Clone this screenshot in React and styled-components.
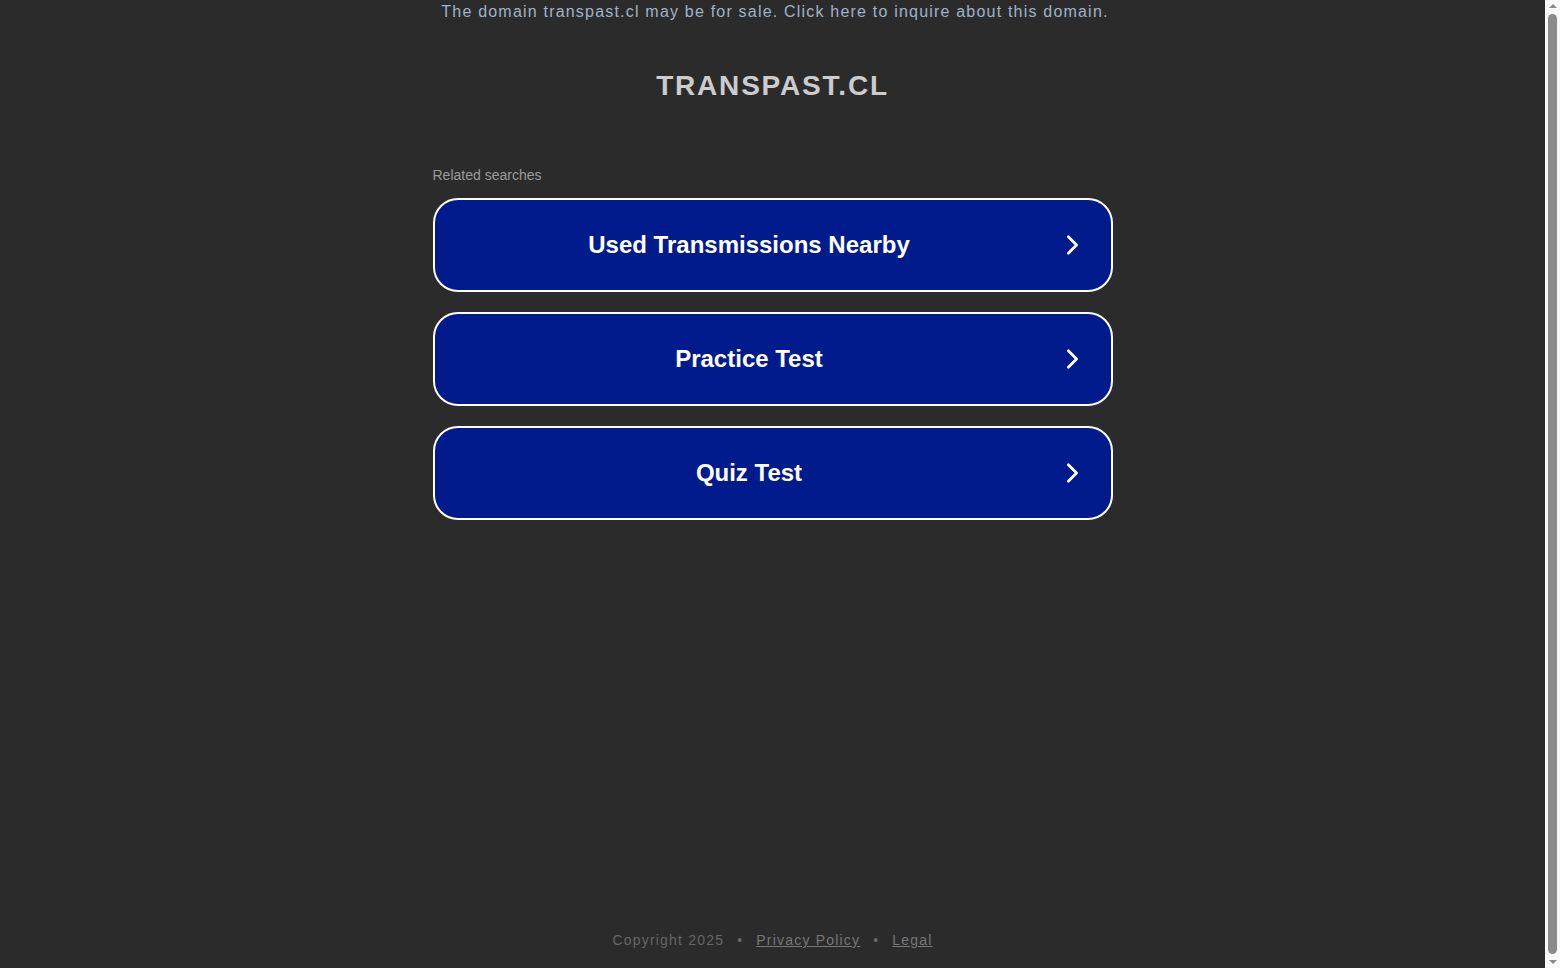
import styled, { createGlobalStyle } from "styled-components";

const GlobalStyle = createGlobalStyle`
  html, body {
    margin: 0;
    padding: 0;
    background: #2b2b2b;
    font-family: "Liberation Sans", Arial, sans-serif;
  }
`;

const Page = styled.div`
  width: calc(100% - 15px);
  min-height: calc(100vh + 32px);
  display: flex;
  flex-direction: column;
  align-items: center;
`;

/* the browser's classic scrollbar, as seen in the screenshot */
const ScrollTrack = styled.div`
  position: fixed;
  top: 0;
  right: 0;
  width: 15px;
  height: 100vh;
  background: #f8f8f8;
  display: flex;
  flex-direction: column;
  align-items: center;
  justify-content: space-between;
  padding: 4px 0;
  box-sizing: border-box;
`;

const ScrollThumb = styled.div`
  flex: 1;
  width: 9px;
  margin: 6px 0;
  border-radius: 5px;
  background: #8a8a8a;
`;

const Arrow = styled.div`
  width: 0;
  height: 0;
  border-left: 4px solid transparent;
  border-right: 4px solid transparent;
  ${(p) =>
    p.$down
      ? "border-top: 4px solid #8a8a8a;"
      : "border-bottom: 4px solid #8a8a8a;"}
`;

const SaleNotice = styled.a`
  display: block;
  margin: 1px 0 0 5px;
  font-size: 16px;
  line-height: 22px;
  letter-spacing: 1.2px;
  color: #9fb3c8;
  text-decoration: none;
  text-align: center;
`;

const Title = styled.h1`
  margin: 47px 0 0 0;
  font-size: 28px;
  line-height: 32px;
  font-weight: bold;
  letter-spacing: 1.8px;
  color: #cccccc;
  text-align: center;
`;

const Container = styled.div`
  width: 680px;
  margin-top: 65px;
`;

const Label = styled.div`
  font-size: 14px;
  line-height: 16px;
  color: #9a9a9a;
  margin-bottom: 15px;
`;

const List = styled.div`
  display: flex;
  flex-direction: column;
  gap: 20px;
`;

const SearchLink = styled.a`
  display: flex;
  align-items: center;
  box-sizing: border-box;
  height: 94px;
  padding: 0 28px 0 3px;
  border: 2px solid #ffffff;
  border-radius: 25px;
  background: #011a8c;
  color: #ffffff;
  text-decoration: none;
  cursor: pointer;
`;

const LinkText = styled.span`
  flex: 1;
  text-align: center;
  font-size: 24px;
  font-weight: bold;
`;

const Chevron = styled.svg`
  width: 22px;
  height: 22px;
  flex: none;
`;

const Footer = styled.footer`
  margin-top: auto;
  padding-bottom: 50px;
  font-size: 14px;
  line-height: 20px;
  letter-spacing: 1.2px;
  color: #666666;
  display: flex;
  gap: 13px;
`;

const FooterLink = styled.a`
  color: #777777;
  text-decoration: underline;
`;

const searches = ["Used Transmissions Nearby", "Practice Test", "Quiz Test"];

function App() {
  return (
    <>
      <GlobalStyle />
      <Page>
        <SaleNotice>
          The domain transpast.cl may be for sale. Click here to inquire about
          this domain.
        </SaleNotice>
        <Title>TRANSPAST.CL</Title>
        <Container>
          <Label>Related searches</Label>
          <List>
            {searches.map((s) => (
              <SearchLink key={s}>
                <LinkText>{s}</LinkText>
                <Chevron viewBox="0 0 24 24" fill="none">
                  <path
                    d="M8 3l9 9-9 9"
                    stroke="#ffffff"
                    strokeWidth="3"
                    strokeLinecap="round"
                    strokeLinejoin="round"
                  />
                </Chevron>
              </SearchLink>
            ))}
          </List>
        </Container>
        <Footer>
          <span>Copyright 2025</span>
          <span>•</span>
          <FooterLink>Privacy Policy</FooterLink>
          <span>•</span>
          <FooterLink>Legal</FooterLink>
        </Footer>
      </Page>
      <ScrollTrack>
        <Arrow />
        <ScrollThumb />
        <Arrow $down />
      </ScrollTrack>
    </>
  );
}

export default App;
